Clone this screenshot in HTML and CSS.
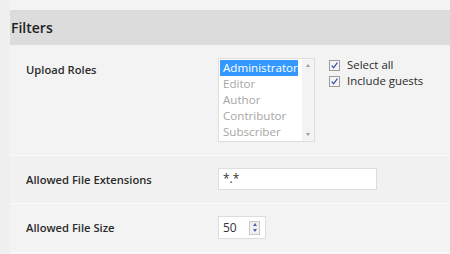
FILE: index.html
```html
<!DOCTYPE html>
<html lang="en">
<head>
    <meta charset="UTF-8">
    <title>Filters</title>
    <link rel="stylesheet" href="styles.css">
</head>
<body>
    <div class="page">
        <h2 class="section-title">Filters</h2>

        <!-- Upload roles -->
        <div class="row roles-row">
            <div class="label">Upload Roles</div>
            <div class="control roles-control">
                <div class="listbox">
                    <ul class="options">
                        <li class="selected">Administrator</li>
                        <li>Editor</li>
                        <li>Author</li>
                        <li>Contributor</li>
                        <li>Subscriber</li>
                    </ul>
                    <div class="scrollbar">
                        <span class="arrow up"></span>
                        <span class="arrow down"></span>
                    </div>
                </div>
                <div class="checks">
                    <label class="check"><span class="box"><svg viewBox="0 0 10 10" width="10" height="10"><path d="M2 5.2 L4 7.6 L8.2 1.8" fill="none" stroke="#3b4fa8" stroke-width="1.4"/></svg></span>Select all</label>
                    <label class="check"><span class="box"><svg viewBox="0 0 10 10" width="10" height="10"><path d="M2 5.2 L4 7.6 L8.2 1.8" fill="none" stroke="#3b4fa8" stroke-width="1.4"/></svg></span>Include guests</label>
                </div>
            </div>
        </div>

        <div class="row">
            <div class="label">Allowed File Extensions</div>
            <div class="control">
                <div class="text-input ext-input">*.*</div>
            </div>
        </div>

        <div class="row">
            <div class="label">Allowed File Size</div>
            <div class="control">
                <div class="text-input size-input">
                    <span>50</span>
                    <span class="spinner">
                        <span class="arrow up"></span>
                        <span class="arrow down"></span>
                    </span>
                </div>
            </div>
        </div>
    </div>
</body>
</html>
```
FILE: styles.css
```css
body {
    margin: 0;
    background: #efefef;
    font-family: "Open Sans", "Liberation Sans", sans-serif;
    color: #222;
}

.page {
    margin-left: 10px;
    padding-top: 10px;
    background: #f3f3f3;
    min-height: 254px;
}

.section-title {
    margin: 0;
    height: 35px;
    line-height: 35px;
    padding-left: 1px;
    background: #dcdcdc;
    font-size: 14px;
    font-weight: 600;
    color: #222;
}

.row {
    display: grid;
    grid-template-columns: 192px auto;
    align-items: center;
    padding: 12px 0 13px 16px;
    border-bottom: 1px solid #fafafa;
}
.row:nth-child(odd) {
    background: #f1f1f1;
}

.label {
    font-size: 11.2px;
    font-weight: 600;
    color: #2a2a2a;
}

/* Roles */
.roles-row {
    align-items: start;
    padding: 13px 0 13px 16px;
}
.roles-row .label {
    padding-top: 4px;
}
.roles-control {
    display: flex;
    gap: 14px;
}

.listbox {
    display: flex;
    width: 95px;
    height: 82px;
    background: #fff;
    border: 1px solid #dedede;
}
.options {
    list-style: none;
    margin: 0;
    padding: 1px 4px 0 1px;
    flex: 1;
    font-size: 11.6px;
    line-height: 16px;
    color: #a6a6a6;
}
.options li {
    padding-left: 3px;
}
.options li.selected {
    background: #3399ff;
    color: #fff;
}

.scrollbar {
    width: 12px;
    background: #f3f3f3;
    display: flex;
    flex-direction: column;
    justify-content: space-between;
    align-items: center;
    padding: 5px 0;
}

.arrow {
    width: 0;
    height: 0;
    border-left: 2.5px solid transparent;
    border-right: 2.5px solid transparent;
}
.arrow.up { border-bottom: 3px solid #9a9a9a; }
.arrow.down { border-top: 3px solid #9a9a9a; }

.checks {
    display: flex;
    flex-direction: column;
    gap: 4px;
    padding-top: 1px;
}
.check {
    display: flex;
    align-items: center;
    gap: 7px;
    font-size: 11.4px;
    line-height: 12px;
    color: #2a2a2a;
}
.box {
    width: 9px;
    height: 9px;
    border: 1px solid #9b9b9b;
    background: #f4f4f4;
    display: flex;
}
.box svg {
    width: 9px;
    height: 9px;
}

/* Inputs */
.text-input {
    box-sizing: border-box;
    height: 22px;
    background: #fff;
    border: 1px solid #dddddd;
    font-size: 12px;
    line-height: 20px;
    padding-left: 4px;
    color: #333;
}
.ext-input {
    width: 159px;
}
.size-input {
    width: 48px;
    height: 23px;
    display: flex;
    align-items: center;
    justify-content: space-between;
    padding-right: 5px;
}
.spinner {
    width: 11px;
    height: 14px;
    border: 1px solid #c8c8c8;
    background: #f0f0f0;
    box-sizing: border-box;
    display: flex;
    flex-direction: column;
    justify-content: space-around;
    align-items: center;
}
.spinner .arrow.up { border-bottom-color: #4a64b8; }
.spinner .arrow.down { border-top-color: #4a64b8; }
```
